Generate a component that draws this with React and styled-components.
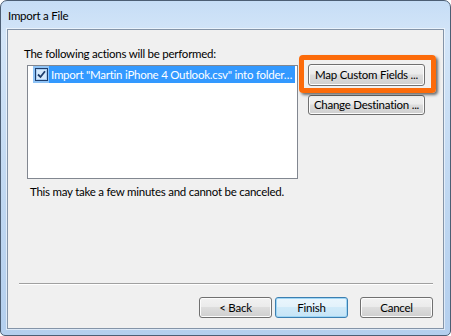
import React from "react";
import styled, { createGlobalStyle } from "styled-components";

const Global = createGlobalStyle`
  html, body { margin: 0; padding: 0; background: #ffffff; }
  body { font-family: Lato, "Liberation Sans", sans-serif; font-size: 11.5px; letter-spacing: -0.25px; color: #000; }
  * { box-sizing: border-box; }
`;

const Window = styled.div`
  width: 451px;
  height: 336px;
  border: 1px solid #4c5e74;
  border-radius: 7px 7px 5px 5px;
  background: linear-gradient(180deg, #c6ddf6 0%, #d3e5f8 10%, #bfd7f1 60%, #b4cfee 100%);
  padding: 0 6px 6px 6px;
  display: flex;
  flex-direction: column;
  overflow: hidden;
`;

const TitleBar = styled.div`
  height: 28px;
  display: flex;
  align-items: center;
  padding-left: 1px;
  padding-top: 1px;
  color: #000;
`;

const Client = styled.div`
  position: relative;
  flex: 1;
  background: #f0f0f0;
  border: 1px solid #8494a8;
  box-shadow: 0 0 0 1px rgba(255, 255, 255, 0.55);
  display: flex;
  flex-direction: column;
`;

const Body = styled.div`
  padding: 16px 16px 0 16px;
  display: flex;
  flex-direction: column;
`;

const Label = styled.div`
  line-height: 15px;
  height: 15px;
`;

const ContentRow = styled.div`
  display: flex;
  align-items: flex-start;
  margin-top: 4px;
  margin-left: 3px;
`;

const ListBox = styled.div`
  width: 271px;
  height: 114px;
  border: 1px solid #828790;
  background: #ffffff;
  display: flex;
  flex-direction: column;
`;

const ListRow = styled.div`
  height: 17px;
  display: flex;
  align-items: stretch;
  padding-left: 5px;
`;

const CheckCell = styled.div`
  width: 16px;
  display: flex;
  align-items: center;
  justify-content: center;
  background: #8ec3f6;
`;

const RowText = styled.div`
  flex: 0 0 246px;
  background: #3399ff;
  color: #ffffff;
  line-height: 17px;
  padding-left: 2px;
  white-space: nowrap;
  overflow: hidden;
`;

const SideButtons = styled.div`
  display: flex;
  flex-direction: column;
  gap: 9px;
  margin-left: 10px;
  margin-top: -1px;
`;

const Button = styled.button`
  font-family: inherit;
  font-size: inherit;
  letter-spacing: inherit;
  color: #000;
  height: ${(p) => p.$h || 21}px;
  width: ${(p) => p.$w}px;
  padding: 0;
  border: 1px solid ${(p) => (p.$default ? "#3c7fb1" : "#707070")};
  border-radius: 3px;
  background: ${(p) =>
    p.$default
      ? "linear-gradient(180deg, #eaf6fd 0%, #e3f2fb 45%, #d0eaf9 50%, #c6e4f6 100%)"
      : "linear-gradient(180deg, #f2f2f2 0%, #ebebeb 45%, #dddddd 50%, #cfcfcf 100%)"};
  box-shadow: inset 0 0 0 1px ${(p) => (p.$default ? "#9fd6f5" : "#fcfcfc")};
  line-height: 1;
  white-space: nowrap;
  display: flex;
  align-items: center;
  justify-content: center;
`;

const Note = styled.div`
  line-height: 15px;
  margin-top: 5px;
  margin-left: 6px;
`;

const Spacer = styled.div`
  flex: 1;
`;

const Footer = styled.div`
  padding: 0 10px 10px 11px;
  display: flex;
  flex-direction: column;
`;

const Separator = styled.div`
  height: 2px;
  border-top: 1px solid #a0a0a0;
  border-bottom: 1px solid #ffffff;
`;

const ButtonRow = styled.div`
  display: flex;
  justify-content: flex-end;
  margin-top: 12px;
`;

const Highlight = styled.div`
  position: absolute;
  left: 291px;
  top: 25px;
  width: 137px;
  height: 38px;
  border: 5px solid #fc6b0a;
  border-radius: 4px;
  box-shadow: 2px 2px 3px rgba(0, 0, 0, 0.55);
  pointer-events: none;
`;

const CheckIcon = () => (
  <svg width="13" height="13" viewBox="0 0 13 13">
    <rect x="0.5" y="0.5" width="12" height="12" fill="#d6eafc" stroke="#1e3e6c" />
    <rect x="1.5" y="1.5" width="10" height="10" fill="none" stroke="#a9cdf2" />
    <path d="M3 6.5 L5.5 9 L10 3.3" fill="none" stroke="#1e3e6c" strokeWidth="1.8" />
  </svg>
);

export default function App() {
  return (
    <>
      <Global />
      <Window>
        <TitleBar>Import a File</TitleBar>
        <Client>
          <Body>
            <Label>The following actions will be performed:</Label>
            <ContentRow>
              <ListBox>
                <ListRow>
                  <CheckCell>
                    <CheckIcon />
                  </CheckCell>
                  <RowText>Import "Martin iPhone 4 Outlook.csv" into folder…</RowText>
                </ListRow>
              </ListBox>
              <SideButtons>
                <Button $w={117} $h={22}>Map Custom Fields ...</Button>
                <Button $w={117} $h={20}>Change Destination ...</Button>
              </SideButtons>
            </ContentRow>
            <Note>This may take a few minutes and cannot be canceled.</Note>
          </Body>
          <Spacer />
          <Footer>
            <Separator />
            <ButtonRow>
              <Button $w={73}>&lt; Back</Button>
              <Button $w={73} $default style={{ marginLeft: 3 }}>Finish</Button>
              <Button $w={73} style={{ marginLeft: 12 }}>Cancel</Button>
            </ButtonRow>
          </Footer>
          <Highlight />
        </Client>
      </Window>
    </>
  );
}
